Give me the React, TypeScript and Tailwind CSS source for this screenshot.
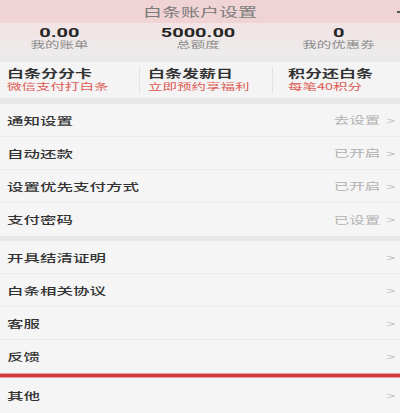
import React from "react";

// Text rendered slightly compressed vertically, as on the device capture.
function Sq({ children, className }: { children: React.ReactNode; className: string }) {
  return <span className={`inline-block origin-center scale-y-[0.64] whitespace-nowrap ${className}`}>{children}</span>;
}

type Row = { label: string; value?: string };

const settings: Row[] = [
  { label: "通知设置", value: "去设置" },
  { label: "自动还款", value: "已开启" },
  { label: "设置优先支付方式", value: "已开启" },
  { label: "支付密码", value: "已设置" },
];

const misc: Row[] = [
  { label: "开具结清证明" },
  { label: "白条相关协议" },
  { label: "客服" },
  { label: "反馈" },
];

function ListRow({ row, last, tall }: { row: Row; last?: boolean; tall?: boolean }) {
  return (
    <div
      className={`flex items-center justify-between pl-[7px] pr-[5px] bg-[#f5f5f5] ${tall ? "h-[35px]" : "h-[33px]"} ${
        last ? "" : "border-b border-[#ebebeb]"
      }`}
    >
      <Sq className="text-[16.5px] leading-none font-medium text-[#333]">{row.label}</Sq>
      <div className="flex items-center">
        {row.value && <Sq className="text-[15.5px] leading-none text-[#b2b2b2]">{row.value}</Sq>}
        <Sq className="ml-[6px] text-[15px] leading-none text-[#bdbdbd] font-['Liberation_Sans',sans-serif]">&gt;</Sq>
      </div>
    </div>
  );
}

function Stat({ num, label, width }: { num: string; label: string; width: string }) {
  return (
    <div className={`flex flex-col items-center pt-[3px] ${width}`}>
      <div className="h-[13px] flex items-center">
        <Sq className="text-[20px] leading-none font-bold text-[#262626] font-['Roboto','Noto_Sans',sans-serif]">{num}</Sq>
      </div>
      <div className="h-[11px] flex items-center">
        <Sq className="text-[14.5px] leading-none text-[#8c8c8c]">{label}</Sq>
      </div>
    </div>
  );
}

function Card({ title, sub, className }: { title: string; sub: string; className: string }) {
  return (
    <div className={`flex flex-col pt-[5px] ${className}`}>
      <div className="h-[13px] flex items-center">
        <Sq className="text-[17px] leading-none font-bold text-[#333]">{title}</Sq>
      </div>
      <div className="h-[13px] flex items-center">
        <Sq className="text-[14.5px] leading-none text-[#de5b55] font-['Noto_Sans_CJK_SC','Roboto',sans-serif]">{sub}</Sq>
      </div>
    </div>
  );
}

export default function App() {
  return (
    <div className="w-[400px] h-[413px] overflow-hidden bg-[#e8e8e8] font-['Noto_Sans_CJK_SC',sans-serif]">
      {/* title bar */}
      <div className="relative h-[23px] bg-[#efd3d5] flex items-center justify-center">
        <Sq className="text-[19px] leading-none text-[#7a7a7a]">白条账户设置</Sq>
        <span className="absolute right-0 top-[11px] w-[3px] h-[2px] bg-[#555]" />
      </div>

      {/* account summary */}
      <div className="h-[34px] flex bg-gradient-to-b from-[#f3e3e4] to-[#ececec]">
        <Stat num="0.00" label="我的账单" width="w-[120px]" />
        <Stat num="5000.00" label="总额度" width="w-[160px]" />
        <Stat num="0" label="我的优惠券" width="w-[124px]" />
      </div>

      <div className="h-[5px]" />

      {/* promotions */}
      <div className="h-[36px] flex bg-[#f4f4f4]">
        <Card title="白条分分卡" sub="微信支付打白条" className="w-[139px] pl-[7px]" />
        <div className="w-px my-[5px] bg-[#e3e3e3]" />
        <Card title="白条发薪日" sub="立即预约享福利" className="w-[132px] pl-[8px]" />
        <div className="w-px my-[5px] bg-[#e3e3e3]" />
        <Card title="积分还白条" sub="每笔40积分" className="flex-1 pl-[15px]" />
      </div>

      <div className="h-[6px]" />

      <div>
        {settings.map((r, i) => (
          <ListRow key={r.label} row={r} last={i === settings.length - 1} />
        ))}
      </div>

      <div className="h-[5px]" />

      <div>
        {misc.map((r, i) => (
          <ListRow key={r.label} row={r} last={i === misc.length - 1} />
        ))}
      </div>

      <div className="h-[5px] bg-[#d13a3b] border-y border-[#e8a0a0]" />

      <ListRow row={{ label: "其他" }} last tall />
    </div>
  );
}
